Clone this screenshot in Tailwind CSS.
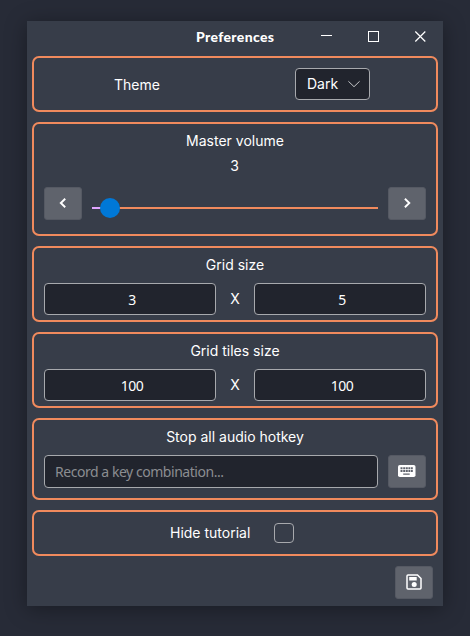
<!DOCTYPE html>
<html lang="en">
<head>
<meta charset="utf-8">
<title>Preferences</title>
<script src="https://cdn.jsdelivr.net/npm/@tailwindcss/browser@4"></script>
</head>
<body class="h-[636px] w-[470px] overflow-hidden bg-[#272b37] px-[27px] pt-[21px] font-['Inter',sans-serif] text-[14px] leading-[20px] text-white">
<main class="flex h-[585px] w-[416px] flex-col bg-[#373d49] px-[5px] shadow-[0_3px_20px_rgba(0,0,0,0.35)]">
  <header class="flex h-[35px] shrink-0 items-start">
    <h1 class="ml-[164px] mt-[6px] w-[78px] whitespace-nowrap font-['Lato',sans-serif] text-[14px] leading-[20px] font-black"><svg class="block h-[20px] w-[78px] overflow-visible" fill="white"><text x="0" y="15" textLength="78" lengthAdjust="spacing">Preferences</text></svg></h1>
    <svg class="ml-[47px] mt-[10px] block h-[12px] w-[105px] shrink-0" viewBox="0 0 105 12" fill="none" stroke="white"><path d="M0 4.5h11M47.5.5h10v10h-10z" shape-rendering="crispEdges"/><path d="M94.300.500l10 10m0-10-10 10" stroke-width="1.2"/></svg>
  </header>
  <section class="flex h-[56px] shrink-0 rounded-[7px] border-2 border-[#f08a5d]">
    <div class="ml-[80px] mt-[17px] w-[181px]">Theme</div>
    <button class="mt-[10px] flex h-[32px] w-[75px] items-center justify-between rounded-[4px] border border-[#a7a9ad] bg-[#21242d] pl-[11px] pr-[9px]">Dark
      <svg class="h-[8px] w-[12px]" viewBox="0 0 12 8" fill="none" stroke="#c6c7ca"><path d="m.4 1.300 5.600 5.400 5.600-5.400"/></svg>
    </button>
  </section>
  <section class="mt-[10px] flex h-[114px] shrink-0 flex-col rounded-[7px] border-2 border-[#f08a5d] px-[10px] pt-[7px] text-center">
    <div>Master volume</div>
    <div class="mt-[5px] pr-[1px]">3</div>
    <div class="mt-[11px] flex h-[33px] justify-between">
      <button class="grid h-[33px] w-[38px] place-items-center rounded-[3px] border border-[#555963] bg-[#5f636c] pb-[1px]"><svg class="h-[10px] w-[8px]" viewBox="0 0 8 10" fill="none" stroke="white" stroke-width="1.900"><path d="M6.200.700 1.800 5l4.400 4.300"/></svg></button>
      <svg class="mt-[11px] h-[20px] w-[286px]" viewBox="0 0 286 20"><path d="M0 10h286" stroke="#f08a5d" stroke-width="2"/><path d="M0 10h18" stroke="#e0a4ff" stroke-width="2"/><circle cx="18" cy="10" r="10" fill="#0078d7"/></svg>
      <button class="grid h-[33px] w-[38px] place-items-center rounded-[3px] border border-[#555963] bg-[#5f636c] pb-[1px]"><svg class="h-[10px] w-[8px]" viewBox="0 0 8 10" fill="none" stroke="white" stroke-width="1.900"><path d="M1.900.700 6.300 5 1.900 9.300"/></svg></button>
    </div>
  </section>
  <section class="mt-[10px] h-[76px] shrink-0 rounded-[7px] border-2 border-[#f08a5d] px-[10px] pt-[7px] text-center">
    <div>Grid size</div>
    <div class="mt-[8px] flex items-center justify-between">
      <div class="h-[32px] w-[172px] rounded-[4px] border border-[#a7a9ad] bg-[#21242d] pl-[4px] pt-[6px] font-['Noto_Sans',sans-serif] tracking-[-0.5px]">3</div>
      <span>X</span>
      <div class="h-[32px] w-[172px] rounded-[4px] border border-[#a7a9ad] bg-[#21242d] pl-[4px] pt-[6px] font-['Noto_Sans',sans-serif] tracking-[-0.5px]">5</div>
    </div>
  </section>
  <section class="mt-[10px] h-[76px] shrink-0 rounded-[7px] border-2 border-[#f08a5d] px-[10px] pt-[7px] text-center">
    <div>Grid tiles size</div>
    <div class="mt-[8px] flex items-center justify-between">
      <div class="h-[32px] w-[172px] rounded-[4px] border border-[#a7a9ad] bg-[#21242d] pl-[4px] pt-[6px] font-['Noto_Sans',sans-serif] tracking-[-0.5px]">100</div>
      <span>X</span>
      <div class="h-[32px] w-[172px] rounded-[4px] border border-[#a7a9ad] bg-[#21242d] pl-[4px] pt-[6px] font-['Noto_Sans',sans-serif] tracking-[-0.5px]">100</div>
    </div>
  </section>
  <section class="mt-[10px] h-[82px] shrink-0 rounded-[7px] border-2 border-[#f08a5d] px-[10px] pt-[7px] text-center">
    <div>Stop all audio hotkey</div>
    <div class="mt-[8px] flex justify-between">
      <div class="h-[33px] w-[334px] rounded-[4px] border border-[#a7a9ad] bg-[#21242d] pl-[10px] pt-[6px] text-left font-['Noto_Sans',sans-serif] text-[14px] tracking-[-0.46px] text-[#8b8d91]">Record a key combination...</div>
      <button class="grid h-[33px] w-[38px] place-items-center rounded-[3px] border border-[#555963] bg-[#5f636c] pb-[1px]"><svg class="h-[12px] w-[18px]" viewBox="0 0 18 12"><rect width="17.500" height="12" rx="1.800" fill="white"/><g fill="#5f636c"><path d="M2.500 2.300h2v2h-2zm2.700 0h2v2h-2zm2.600 0h2v2h-2zm2.600 0h2v2h-2zm2.600 0h1.800v2H13zM2.500 5h2v2h-2zm2.700 0h2v2h-2zm2.600 0h2v2h-2zm2.600 0h2v2h-2zM13 5h1.800v2H13zM5.200 8.500h6.500v1.300H5.200z"/></g></svg></button>
    </div>
  </section>
  <section class="mt-[10px] flex h-[46px] shrink-0 rounded-[7px] border-2 border-[#f08a5d] pl-[136px] pt-[11px]">
    <div class="w-[104px]">Hide tutorial</div>
    <div class="h-[20px] w-[20px] rounded-[4px] border border-[#a7a9ad]"></div>
  </section>
  <button class="mr-[5px] mt-[10px] grid h-[33px] w-[38px] shrink-0 place-items-center self-end rounded-[3px] border border-[#555963] bg-[#5f636c] pb-[1px]"><svg class="h-[16px] w-[16px]" viewBox="0 0 16 16"><path d="M2 1h9.500L15 4.500V14a1 1 0 0 1-1 1H2a1 1 0 0 1-1-1V2a1 1 0 0 1 1-1z" fill="none" stroke="white" stroke-width="1.500"/><path d="M3.200 3h7.500v3.500H3.200z" fill="white"/><circle cx="8.200" cy="10.600" r="2.500" fill="white"/></svg></button>
</main>
</body>
</html>
